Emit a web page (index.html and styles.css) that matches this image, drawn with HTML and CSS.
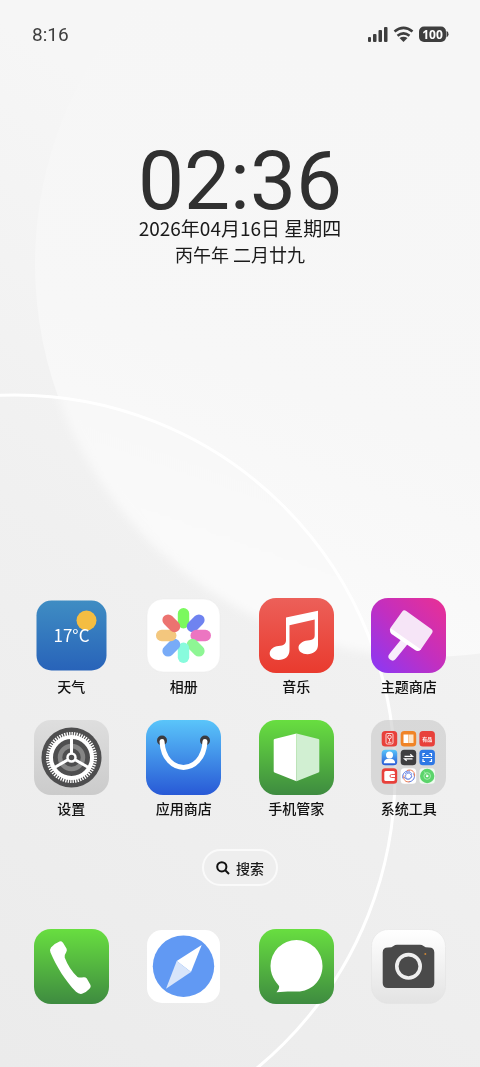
FILE: index.html
```html
<!DOCTYPE html>
<html lang="zh-CN">
<head>
    <meta charset="UTF-8">
    <meta name="viewport" content="width=device-width, initial-scale=1.0">
    <title>桌面</title>
    <link rel="stylesheet" href="styles.css">
</head>
<body>
    <svg class="wallpaper" viewBox="0 0 480 1067" preserveAspectRatio="xMidYMid slice" aria-hidden="true">
        <defs>
            <linearGradient id="paper" x1="0.3" y1="0" x2="0" y2="1">
                <stop offset="0.1" stop-color="#f6f6f6"/>
                <stop offset="0.5" stop-color="#f0f0f0"/>
                <stop offset="1" stop-color="#ebebeb"/>
            </linearGradient>
            <linearGradient id="disc" gradientUnits="userSpaceOnUse" x1="150" y1="570" x2="330" y2="60">
                <stop offset="0" stop-color="#fafafa"/>
                <stop offset="0.4" stop-color="#f7f7f7"/>
                <stop offset="1" stop-color="#f6f6f6"/>
            </linearGradient>
            <filter id="soft" x="-10%" y="-10%" width="120%" height="120%"><feGaussianBlur stdDeviation="5"/></filter>
            <clipPath id="inRing"><circle cx="15" cy="775" r="380"/></clipPath>
        </defs>
        <rect width="480" height="1067" fill="url(#paper)"/>
        <circle cx="428" cy="264" r="393" fill="url(#disc)"/>
        <g clip-path="url(#inRing)">
            <rect width="480" height="1067" fill="url(#paper)"/>
            <circle cx="428" cy="264" r="393" fill="url(#disc)" filter="url(#soft)"/>
        </g>
        <circle cx="15" cy="775" r="380" fill="none" stroke="#fff" stroke-width="3"/>
    </svg>

    <header class="status">
        <span class="status-time">8:16</span>
        <svg class="status-icons" viewBox="0 0 82 18" role="img" aria-label="信号 无线网络 电量">
            <g fill="#3e3e3e">
                <rect x="1" y="12" width="3" height="5" rx="1"/>
                <rect x="6" y="9" width="3.500" height="8" rx="1"/>
                <rect x="11.500" y="5" width="3.500" height="12" rx="1"/>
                <rect x="17" y="2" width="3.500" height="15" rx="1"/>
                <path d="M32.500 13q4-2.500 8 0L36.500 17z"/>
                <rect x="52" y="1.500" width="27" height="15.500" rx="5"/>
                <path d="M79.500 6q2 .5 2 3.200t-2 3.200z"/>
            </g>
            <path d="M27.500 6.500q9-7.200 18 0M30.500 10.700q6-4.600 12 0" fill="none" stroke="#3e3e3e" stroke-width="2.600"/>
            <text class="battery-text" x="65.500" y="13.500">100</text>
        </svg>
    </header>

    <section class="clock">
        <time class="clock-time">02:36</time>
        <p class="clock-date">2026年04月16日 星期四</p>
        <p class="clock-lunar">丙午年 二月廿九</p>
    </section>

    <main class="apps">
        <button class="app" type="button">
            <svg viewBox="0 0 75 75" aria-hidden="true">
                <defs><linearGradient id="sky" x2="0" y2="1"><stop stop-color="#3f8dc3"/><stop offset="1" stop-color="#2863b9"/></linearGradient></defs>
                <rect x="2.500" y="2.500" width="70" height="70" rx="15" fill="url(#sky)"/>
                <circle cx="52.500" cy="22.500" r="10" fill="#f4bd42"/>
                <text class="weather-text" x="37.500" y="44">17°C</text>
            </svg>
            <span>天气</span>
        </button>
        <button class="app" type="button">
            <svg viewBox="0 0 75 75" aria-hidden="true">
                <rect x="1" y="1" width="73" height="73" rx="16" fill="#fff" stroke="#e9e9e9" stroke-width=".5"/>
                <g transform="translate(37.500 37.500)">
                    <rect x="-5.700" y="-27.500" width="11.400" height="20.500" rx="5.700" fill="#7bf95e"/>
                    <rect x="-5.700" y="-27.500" width="11.400" height="20.500" rx="5.700" fill="#6f83f0" transform="rotate(45)"/>
                    <rect x="-5.700" y="-27.500" width="11.400" height="20.500" rx="5.700" fill="#ec75c1" transform="rotate(90)"/>
                    <rect x="-5.700" y="-27.500" width="11.400" height="20.500" rx="5.700" fill="#8ef694" transform="rotate(135)"/>
                    <rect x="-5.700" y="-27.500" width="11.400" height="20.500" rx="5.700" fill="#88fbdd" transform="rotate(180)"/>
                    <rect x="-5.700" y="-27.500" width="11.400" height="20.500" rx="5.700" fill="#78abf7" transform="rotate(225)"/>
                    <rect x="-5.700" y="-27.500" width="11.400" height="20.500" rx="5.700" fill="#f3c77e" transform="rotate(270)"/>
                    <rect x="-5.700" y="-27.500" width="11.400" height="20.500" rx="5.700" fill="#ec7370" transform="rotate(315)"/>
                </g>
            </svg>
            <span>相册</span>
        </button>
        <button class="app" type="button">
            <svg viewBox="0 0 75 75" aria-hidden="true">
                <defs><linearGradient id="red" x2="0" y2="1"><stop stop-color="#ec6059"/><stop offset="1" stop-color="#e93a2e"/></linearGradient></defs>
                <rect width="75" height="75" rx="17" fill="url(#red)"/>
                <path fill="#fff" d="M27 19.500L59 12.700V47C59 53 54 56.200 48.500 56.200C43 56.200 39.500 53.500 39.500 49.800C39.500 46 43.500 43.200 48.500 42.600C54 42 55.700 41 55.700 37V21.500L30.500 27.300V52C30.500 58.500 26 62 19.500 62C14 62 10.700 59 10.700 55.500C10.700 51.500 14.500 48.600 19.500 48.100C25 47.600 27 46 27 42Z"/>
            </svg>
            <span>音乐</span>
        </button>
        <button class="app" type="button">
            <svg viewBox="0 0 75 75" aria-hidden="true">
                <defs><linearGradient id="theme" x1="0" y1="1" x2="1" y2="0"><stop stop-color="#8839f7"/><stop offset=".5" stop-color="#c22fc0"/><stop offset="1" stop-color="#ea3093"/></linearGradient></defs>
                <rect width="75" height="75" rx="17" fill="url(#theme)"/>
                <path d="M34 43L21.500 58.500" stroke="#f9ecfc" stroke-width="8" stroke-linecap="round"/>
                <path d="M33.500 15.500L58.500 33.500L47.500 49.500L22 31.500Z" fill="#f6e5f7" stroke="#f6e5f7" stroke-width="6" stroke-linejoin="round"/>
                <path d="M20 30.500L50 51.500Q47 54 44 52L20.500 36Q18 33.500 20 30.500Z" fill="#fff"/>
            </svg>
            <span>主题商店</span>
        </button>
        <button class="app" type="button">
            <svg viewBox="0 0 75 75" aria-hidden="true">
                <defs><linearGradient id="steel" x2="0" y2="1"><stop stop-color="#dedede"/><stop offset="1" stop-color="#cbcbcb"/></linearGradient></defs>
                <rect width="75" height="75" rx="17" fill="url(#steel)"/>
                <circle cx="37.500" cy="37.500" r="30" fill="#4e4e4f"/>
                <g fill="none" stroke="#fff">
                    <circle cx="37.500" cy="37.500" r="23.500" stroke-width="4" pathLength="120" stroke-dasharray="1.100 .9"/>
                    <circle cx="37.500" cy="37.500" r="20.500" stroke-width="4"/>
                    <circle cx="37.500" cy="37.500" r="11.500" stroke="#858585" stroke-width="4.500"/>
                    <path d="M37.500 33V18M33.500 40L20.500 47.500M41.500 40L54.500 47.500" stroke-width="3"/>
                    <circle cx="37.500" cy="37.500" r="4" fill="#4e4e4f" stroke-width="2.500"/>
                </g>
            </svg>
            <span>设置</span>
        </button>
        <button class="app" type="button">
            <svg viewBox="0 0 75 75" aria-hidden="true">
                <defs><linearGradient id="blue" x2="0" y2="1"><stop stop-color="#5ac5fa"/><stop offset="1" stop-color="#2859d6"/></linearGradient></defs>
                <rect width="75" height="75" rx="17" fill="url(#blue)"/>
                <circle cx="16" cy="20.500" r="5" fill="#3b3b40"/>
                <circle cx="59" cy="20.500" r="5" fill="#3b3b40"/>
                <path d="M16 21.500C18 56 57 56 59 21.500" fill="none" stroke="#fff" stroke-width="5" stroke-linecap="round"/>
            </svg>
            <span>应用商店</span>
        </button>
        <button class="app" type="button">
            <svg viewBox="0 0 75 75" aria-hidden="true">
                <defs><linearGradient id="green" x2="0" y2="1"><stop stop-color="#68de40"/><stop offset="1" stop-color="#3e8b40"/></linearGradient></defs>
                <rect width="75" height="75" rx="17" fill="url(#green)"/>
                <path d="M37.500 13.500L15.500 19Q14.700 19.300 14.700 20V51Q14.700 52 15.500 52.500L37.500 61.300Z" fill="#fff"/>
                <path d="M37.500 13.500L59.500 19Q60.300 19.300 60.300 20V51Q60.300 52 59.500 52.500L37.500 61.300Z" fill="#d1efd2"/>
            </svg>
            <span>手机管家</span>
        </button>
        <button class="app" type="button">
            <svg viewBox="0 0 75 75" aria-hidden="true">
                <rect width="75" height="75" rx="17" fill="#c4c4c4" fill-opacity=".55"/>
                <rect x="10.700" y="11" width="15.500" height="15.500" rx="3.500" fill="#e8413b"/>
                <rect x="15" y="13.500" width="7" height="10.500" rx="1.200" fill="none" stroke="#fff" stroke-width=".8"/>
                <circle cx="18.500" cy="17" r="1.800" fill="none" stroke="#fff" stroke-width=".8"/>
                <path d="M18.500 18.800v2.500M17 22.300h3.500" stroke="#fff" stroke-width=".8"/>
                <rect x="29.700" y="11" width="15.500" height="15.500" rx="3.500" fill="#f08427"/>
                <path d="M32.500 14.500h4.800v8.500h-4.800z" fill="#fff"/>
                <path d="M37.500 14.500h5v8.500h-5z" fill="#fde6ca"/>
                <rect x="48.400" y="11" width="15.500" height="15.500" rx="3.500" fill="#e8413b"/>
                <text class="tile-text" x="56.200" y="20.800">有品</text>
                <rect x="10.700" y="29.700" width="15.500" height="15.500" rx="3.500" fill="url(#blue)"/>
                <circle cx="18.500" cy="35" r="3.500" fill="#fff"/>
                <path d="M12.800 43.300q.2-4 4-4.600h3.400q3.800.6 4 4.600z" fill="#fff"/>
                <rect x="29.700" y="29.700" width="15.500" height="15.500" rx="3.500" fill="#3e3e40"/>
                <path d="M33.500 36.300h8l-2.200-2M41.500 38.800h-8l2.200 2" fill="none" stroke="#fff" stroke-width="1.200"/>
                <rect x="48.400" y="29.700" width="15.500" height="15.500" rx="3.500" fill="#2e78e5"/>
                <path d="M54 33.500h-2v2.500M58.500 33.500h2v2.500M54 41.500h-2v-2.500M58.500 41.500h2v-2.500M51.500 37.500h9.500M55 35.500h2.500" fill="none" stroke="#fff" stroke-width="1.200"/>
                <rect x="10.700" y="48.300" width="15.500" height="15.500" rx="3.500" fill="#e8413b"/>
                <rect x="13.300" y="51" width="10.500" height="10" rx="1.500" fill="#fff"/>
                <path d="M24 54.500h-3.500a1.500 1.500 0 0 0 0 3H24" fill="#fff" stroke="#e8413b" stroke-width=".9"/>
                <rect x="29.700" y="48.300" width="15.500" height="15.500" rx="3.500" fill="#fff"/>
                <g fill="none" stroke-width="1">
                    <path d="M32 58.500c-1.500-5 3-8.500 7-7.500M42.500 53.500c2.500 4-.5 8-5 8.500" stroke="#5474df"/>
                    <path d="M36 50.500c5-2 8.500 2 7.500 6M39 61.500c-4.500 1.500-7-2-6-6" stroke="#ed8058"/>
                    <path d="M35 58c-2-4 3-7 5-3M40 54c2 4-3 7-5 4M33 57c3 4 7 2 8-1M34 54c2-3 6-2 7 0" stroke="#7791e8"/>
                </g>
                <rect x="48.400" y="48.300" width="15.500" height="15.500" rx="3.500" fill="#eefbef"/>
                <circle cx="56.200" cy="56" r="7.200" fill="#5bd46b"/>
                <circle cx="56.200" cy="56" r="3.300" fill="none" stroke="#b8f1bf" stroke-width=".8"/>
                <circle cx="56.200" cy="56" r="1.300" fill="#fff"/>
                <path d="M56.200 56l-3-4.500" stroke="#b8f1bf" stroke-width=".8"/>
            </svg>
            <span>系统工具</span>
        </button>
    </main>

    <button class="search" type="button">
        <svg viewBox="0 0 14 14" aria-hidden="true"><circle cx="5.800" cy="5.800" r="4.600"/><path d="M9 9l4 4"/></svg>
        <span>搜索</span>
    </button>

    <nav class="dock">
        <button class="app" type="button" aria-label="电话">
            <svg viewBox="0 0 75 75" aria-hidden="true">
                <rect width="75" height="75" rx="17" fill="url(#green)"/>
                <path fill="#fff" d="M17 18.500Q21 14 25.500 12.400Q27.500 12 29 13.700L32.500 19.500Q33.300 21 32.300 23Q30.500 25.500 30.700 28.500Q35 40 43.500 48Q45.500 49 49.500 48.300Q51.500 48 52.800 49.500L56.500 56Q57.300 58 55.500 59.700Q52 63.500 48 64.800Q45 65.500 42 62.800C31 51.500 22.500 37.500 16.500 23.500Q15.400 20.600 17 18.500Z"/>
            </svg>
        </button>
        <button class="app" type="button" aria-label="浏览器">
            <svg viewBox="0 0 75 75" aria-hidden="true">
                <rect x="1" y="1" width="73" height="73" rx="15" fill="#fff"/>
                <circle cx="37.500" cy="37.200" r="30.700" fill="#6199f3"/>
                <path d="M55.700 16L30.700 32L45 43Z" fill="#fff"/>
                <path d="M20 59.700L30.700 32L45 43Z" fill="#d8e5fa"/>
            </svg>
        </button>
        <button class="app" type="button" aria-label="信息">
            <svg viewBox="0 0 75 75" aria-hidden="true">
                <rect width="75" height="75" rx="17" fill="url(#green)"/>
                <path fill="#fff" d="M37.500 11A26 26 0 0 1 63.500 37C63.500 52 52 62.700 38 62.500C32 62.400 25 62.300 17.500 63.200C18.500 61.500 20.300 60 20.200 57.500C20 55.500 11.500 49.500 11.500 37A26 26 0 0 1 37.500 11Z"/>
            </svg>
        </button>
        <button class="app" type="button" aria-label="相机">
            <svg viewBox="0 0 75 75" aria-hidden="true">
                <defs><linearGradient id="pearl" x2="0" y2="1"><stop stop-color="#fff"/><stop offset="1" stop-color="#e3e3e3"/></linearGradient></defs>
                <rect x=".5" y=".5" width="74" height="74" rx="17" fill="url(#pearl)" stroke="#e0e0e0" stroke-width=".5"/>
                <path d="M17 18.500Q21 18.500 22.500 17Q24 15.700 26 15.700H49Q51 15.700 52.500 17Q54 18.500 58 18.500Q63.300 18.500 63.300 23.500V54Q63.300 59 58 59H17Q11.700 59 11.700 54V23.500Q11.700 18.500 17 18.500Z" fill="#4a4a4a"/>
                <circle cx="37.500" cy="37.300" r="11.700" fill="none" stroke="#efefef" stroke-width="3.600"/>
                <circle cx="54.300" cy="25" r="1" fill="#c98436"/>
            </svg>
        </button>
    </nav>
</body>
</html>
```
FILE: styles.css
```css
* {
    box-sizing: border-box;
}
body {
    margin: 0;
    min-height: 100vh;
    display: flex;
    flex-direction: column;
    font-family: "Noto Sans CJK SC", sans-serif;
    background-color: #f0f0f0;
    color: #1a1a1a;
}
button {
    padding: 0;
    border: 0;
    background: none;
    color: inherit;
    font: inherit;
    cursor: pointer;
}

/* Wallpaper sits behind the whole screen */
.wallpaper {
    position: fixed;
    inset: 0;
    width: 100%;
    height: 100%;
    z-index: -1;
}

.status {
    display: flex;
    justify-content: space-between;
    align-items: center;
    height: 68px;
    padding: 0 31px 0 32px;
}
.status-time {
    font-family: Roboto, sans-serif;
    font-size: 19px;
    color: #3e3e3e;
}
.status-icons {
    width: 82px;
    height: 18px;
}
.battery-text {
    font: bold 12px "Open Sans", sans-serif;
    fill: #fff;
    text-anchor: middle;
}

.clock {
    display: flex;
    flex-direction: column;
    align-items: center;
    padding-top: 80px;
}
.clock-time {
    font-family: Roboto, sans-serif;
    font-size: 82px;
    line-height: 66px;
    color: #303030;
}
.clock p {
    margin: 0;
    line-height: 27px;
}
.clock-date {
    font-size: 19px;
}
.clock-lunar {
    font-size: 18px;
}

.apps,
.dock {
    display: grid;
    grid-template-columns: repeat(4, 1fr);
    padding: 0 15px;
}
.apps {
    row-gap: 24px;
    margin-top: auto;
}
.app {
    display: flex;
    flex-direction: column;
    align-items: center;
    font-size: 14px;
    font-weight: 500;
    line-height: 20px;
    color: #111111;
}
.app svg {
    width: 75px;
    height: 75px;
}
.app span {
    margin-top: 3px;
}
.weather-text {
    font-size: 17px;
    font-weight: 400;
    fill: #fff;
    text-anchor: middle;
}
.tile-text {
    font-size: 5px;
    font-weight: bold;
    fill: #fff;
    text-anchor: middle;
}

.search {
    display: flex;
    align-items: center;
    gap: 6px;
    align-self: center;
    margin: 31px 0 43px;
    padding: 0 12px;
    height: 37px;
    border: 2px solid #fafafa;
    border-radius: 19px;
    background-color: #eeeeee;
    font-size: 14px;
    font-weight: 500;
    line-height: 20px;
}
.search svg {
    width: 14px;
    height: 14px;
    fill: none;
    stroke: #111111;
    stroke-width: 2;
}

.dock {
    padding-bottom: 63px;
}
```
